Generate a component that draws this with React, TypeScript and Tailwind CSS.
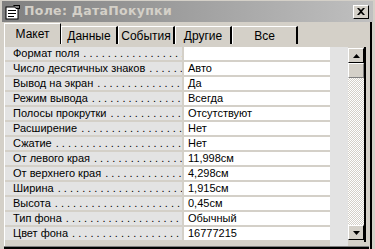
import React from "react";

const rows: [string, string][] = [
  ["Формат поля", ""],
  ["Число десятичных знаков", "Авто"],
  ["Вывод на экран", "Да"],
  ["Режим вывода", "Всегда"],
  ["Полосы прокрутки", "Отсутствуют"],
  ["Расширение", "Нет"],
  ["Сжатие", "Нет"],
  ["От левого края", "11,998см"],
  ["От верхнего края", "4,298см"],
  ["Ширина", "1,915см"],
  ["Высота", "0,45см"],
  ["Тип фона", "Обычный"],
  ["Цвет фона", "16777215"],
];

const tabs = ["Данные", "События", "Другие", "Все"];
const tabWidths = ["w-[57px]", "w-[57px]", "w-[57px]", "w-[66px]"];

const dots = ". ".repeat(40);

export default function App() {
  return (
    <div className="w-[375px] h-[249px] bg-[#d4d0c8] overflow-hidden flex flex-col text-black font-['Liberation_Sans',Arial,sans-serif]">
      {/* title bar */}
      <div className="h-[21px] mx-[2px] mt-[1px] flex items-center bg-gradient-to-r from-[#808080] to-[#c0c0c0]">
        <svg width="16" height="16" viewBox="0 0 16 16" className="ml-[3px] shrink-0">
          <rect x="1" y="3" width="12" height="12" fill="#fff" stroke="#000" />
          <rect x="3" y="6" width="8" height="1" fill="#000" />
          <rect x="3" y="9" width="8" height="1" fill="#000" />
          <rect x="3" y="12" width="6" height="1" fill="#000" />
          <path d="M8 1 L15 1 L15 5 L11 5 Z" fill="#000" />
          <path d="M9 2 L14 2 L14 4 L11 4 Z" fill="#808080" />
        </svg>
        <span className="ml-[3px] text-[12.5px] font-bold text-[#d4d0c8] tracking-[0.3px] font-['DejaVu_Sans',Verdana,sans-serif]">
          Поле: ДатаПокупки
        </span>
        <div className="ml-auto mr-[4px] w-[16px] h-[14px] bg-[#d4d0c8] border border-t-white border-l-white border-r-black border-b-black flex items-center justify-center">
          <svg width="8" height="7" viewBox="0 0 8 7">
            <path d="M0 0 L2 0 L4 2 L6 0 L8 0 L5 3.5 L8 7 L6 7 L4 5 L2 7 L0 7 L3 3.5 Z" fill="#000" />
          </svg>
        </div>
      </div>

      {/* body */}
      <div className="flex-1 flex">
        <div className="flex-1 flex flex-col pl-[4px] pt-[1px]">
          {/* tabs */}
          <div className="flex items-end h-[21px] text-[12px]">
            <div className="w-[57px] h-[21px] border-t border-l border-white flex items-center justify-center pb-[1px] border-r border-r-black">
              Макет
            </div>
            {tabs.map((t, i) => (
              <div
                key={t}
                className={`${tabWidths[i]} h-[18px] border-t border-l border-white border-r-2 border-r-black flex items-center justify-center`}
              >
                {t}
              </div>
            ))}
          </div>
          {/* panel */}
          <div className="flex-1 border-l border-white flex pt-[3px]">
            <div className="flex flex-col gap-[2px] w-[325px] text-[11px]">
              {rows.map(([l, v]) => (
                <div key={l} className="flex h-[13px] leading-[13px]">
                  <div className="w-[177px] bg-[#e3e3e3] pl-[8px] flex whitespace-nowrap">
                    <span className="shrink-0">{l}</span>
                    <span className="flex-1 pl-[4px] overflow-hidden">{dots}</span>
                  </div>
                  <div className="flex-1 ml-[2px] pl-[4px] bg-white whitespace-nowrap">
                    {v}
                  </div>
                </div>
              ))}
            </div>
            <div className="w-[18px] bg-[#e3e3e3]" />
            {/* scrollbar */}
            <div className="w-[16px] mt-[1px] mb-[6px] flex flex-col bg-[repeating-conic-gradient(#d4d0c8_0_25%,#ffffff_0_50%)] bg-size-[2px_2px]">
              <div className="h-[15px] bg-[#d4d0c8] border border-t-white border-l-white border-r-black border-b-black flex items-center justify-center">
                <svg width="7" height="4" viewBox="0 0 7 4">
                  <path d="M3.5 0 L7 4 L0 4 Z" fill="#000" />
                </svg>
              </div>
              <div className="h-[15px] bg-[#d4d0c8] border border-t-white border-l-white border-r-[#808080] border-b-[#808080]" />
              <div className="flex-1" />
              <div className="h-[15px] bg-[#d4d0c8] border border-t-white border-l-white border-r-black border-b-black flex items-center justify-center">
                <svg width="7" height="4" viewBox="0 0 7 4">
                  <path d="M0 0 L7 0 L3.5 4 Z" fill="#000" />
                </svg>
              </div>
            </div>
            <div className="w-[2px] bg-black mb-[4px]" />
          </div>
          <div className="h-[3px] border-t border-[#808080] border-b-2 border-b-black" />
        </div>
        {/* right frame */}
        <div className="w-[6px] flex">
          <div className="w-[1px] bg-[#d4d0c8]" />
          <div className="w-[2px] bg-black" />
          <div className="w-[3px] bg-[#d4d0c8]" />
        </div>
      </div>
    </div>
  );
}
